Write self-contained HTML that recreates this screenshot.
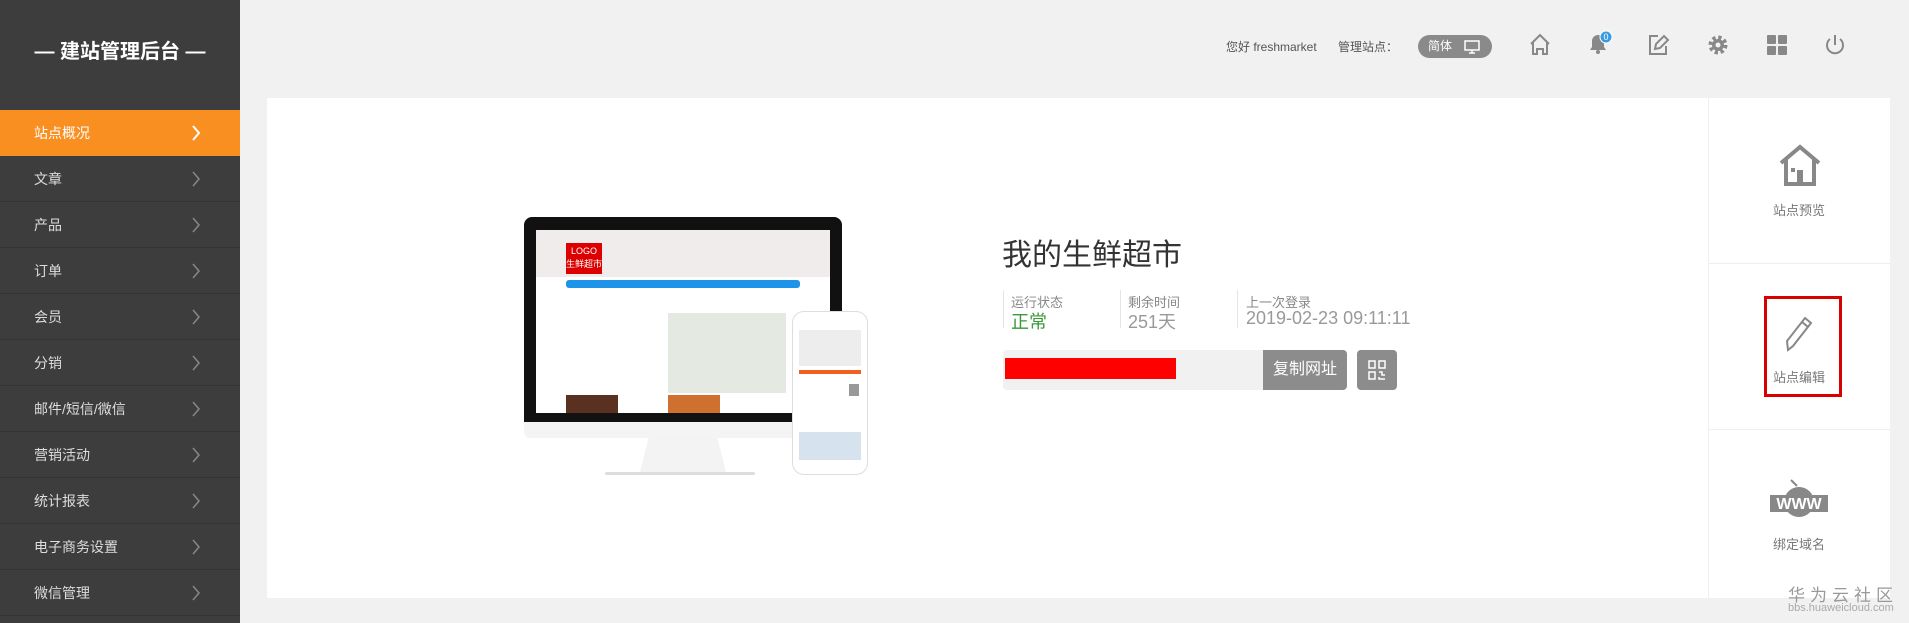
<!DOCTYPE html>
<html><head><meta charset="utf-8"><style>
*{margin:0;padding:0;box-sizing:border-box}
body{width:1909px;height:623px;background:#f1f1f1;font-family:"Liberation Sans","Noto Sans CJK SC",sans-serif;position:relative;overflow:hidden;color:#333}
.a{position:absolute}
#side{left:0;top:0;width:240px;height:623px;background:#3d3d3d}
#side .t{left:0;top:36px;width:240px;text-align:center;color:#fff;font-size:20px;line-height:32px;font-weight:bold}
.mi{left:0;width:240px;height:46px;border-bottom:1px solid #333;color:#ddd;font-size:14px;line-height:46px;padding-left:34px}
.mi svg{position:absolute;left:191px;top:15px}
.on{background:#fa8f21;color:#fff;border:none}
.ic{top:32px}
#panel{left:267px;top:98px;width:1623px;height:500px;background:#fff}
.rs{left:1708px;width:182px;border-left:1px solid #eee;border-bottom:1px solid #eee;text-align:center;color:#777;font-size:13px}
.lbl{font-size:13px;color:#888}
.val{font-size:18px;color:#999}
</style></head><body>
<div id="side" class="a">
 <div class="a t">— 建站管理后台 —</div>
 <div class="a mi on" style="top:110px">站点概况<svg width="10" height="16"><path d="M2 1l6 7-6 7" stroke="#fff" stroke-width="2" fill="none"/></svg></div>
 <div class="a mi" style="top:156px">文章<svg width="10" height="16"><path d="M2 1l6 7-6 7" stroke="#888" stroke-width="1.5" fill="none"/></svg></div>
 <div class="a mi" style="top:202px">产品<svg width="10" height="16"><path d="M2 1l6 7-6 7" stroke="#888" stroke-width="1.5" fill="none"/></svg></div>
 <div class="a mi" style="top:248px">订单<svg width="10" height="16"><path d="M2 1l6 7-6 7" stroke="#888" stroke-width="1.5" fill="none"/></svg></div>
 <div class="a mi" style="top:294px">会员<svg width="10" height="16"><path d="M2 1l6 7-6 7" stroke="#888" stroke-width="1.5" fill="none"/></svg></div>
 <div class="a mi" style="top:340px">分销<svg width="10" height="16"><path d="M2 1l6 7-6 7" stroke="#888" stroke-width="1.5" fill="none"/></svg></div>
 <div class="a mi" style="top:386px">邮件/短信/微信<svg width="10" height="16"><path d="M2 1l6 7-6 7" stroke="#888" stroke-width="1.5" fill="none"/></svg></div>
 <div class="a mi" style="top:432px">营销活动<svg width="10" height="16"><path d="M2 1l6 7-6 7" stroke="#888" stroke-width="1.5" fill="none"/></svg></div>
 <div class="a mi" style="top:478px">统计报表<svg width="10" height="16"><path d="M2 1l6 7-6 7" stroke="#888" stroke-width="1.5" fill="none"/></svg></div>
 <div class="a mi" style="top:524px">电子商务设置<svg width="10" height="16"><path d="M2 1l6 7-6 7" stroke="#888" stroke-width="1.5" fill="none"/></svg></div>
 <div class="a mi" style="top:570px">微信管理<svg width="10" height="16"><path d="M2 1l6 7-6 7" stroke="#888" stroke-width="1.5" fill="none"/></svg></div>
</div>

<div class="a" style="left:1226px;top:38px;font-size:12px;color:#555">您好 freshmarket</div>
<div class="a" style="left:1338px;top:38px;font-size:12px;color:#555">管理站点：</div>
<div class="a" style="left:1418px;top:35px;width:74px;height:23px;border-radius:12px;background:#8a8a8a;color:#fff;font-size:12px;line-height:23px;padding-left:10px">简体
 <svg class="a" style="left:46px;top:5px" width="16" height="14"><rect x="1" y="1" width="14" height="9" fill="none" stroke="#fff" stroke-width="1.5"/><path d="M8 10v3M5 13h6" stroke="#fff" stroke-width="1.5"/></svg></div>
<svg class="a ic" style="left:1528px" width="24" height="26" viewBox="0 0 24 26"><path d="M3 12L12 3l9 9M5 10v12h4v-5h6v5h4V10" fill="none" stroke="#888" stroke-width="2"/></svg>
<svg class="a ic" style="left:1586px;top:28px" width="28" height="28" viewBox="0 0 28 28"><path d="M4 22h16l-2-3v-6a6 6 0 0 0-12 0v6z" fill="#888"/><circle cx="12" cy="24" r="2" fill="#888"/><circle cx="20" cy="9" r="6" fill="#3a9be0" stroke="#fff" stroke-width="1"/><text x="20" y="12" font-size="9" fill="#fff" text-anchor="middle" font-family="Liberation Sans">0</text></svg>
<svg class="a ic" style="left:1646px" width="24" height="26" viewBox="0 0 24 26"><path d="M12 4H4v18h16v-8" fill="none" stroke="#888" stroke-width="2"/><path d="M9 17l1-5 8-8 4 4-8 8z" fill="none" stroke="#888" stroke-width="2"/></svg>
<svg class="a ic" style="left:1706px" width="24" height="26" viewBox="0 0 24 24"><circle cx="12" cy="12" r="7" fill="none" stroke="#888" stroke-width="5" stroke-dasharray="3 2.5"/><circle cx="12" cy="12" r="6" fill="#888"/><circle cx="12" cy="12" r="2.5" fill="#f1f1f1"/></svg>
<svg class="a ic" style="left:1765px" width="24" height="26" viewBox="0 0 24 24"><rect x="2" y="2" width="9" height="9" rx="1" fill="#888"/><rect x="13" y="2" width="9" height="9" rx="1" fill="#888"/><rect x="2" y="13" width="9" height="9" rx="1" fill="#888"/><rect x="13" y="13" width="9" height="9" rx="1" fill="#888"/></svg>
<svg class="a ic" style="left:1823px" width="24" height="26" viewBox="0 0 24 24"><path d="M7 6a8 8 0 1 0 10 0" fill="none" stroke="#888" stroke-width="2"/><path d="M12 2v10" stroke="#888" stroke-width="2"/></svg>

<div id="panel" class="a"></div>
<!-- monitor -->
<div class="a" style="left:524px;top:217px;width:318px;height:205px;background:#111;border-radius:8px 8px 0 0"></div>
<div class="a" style="left:536px;top:230px;width:294px;height:183px;background:#fff"></div>
<div class="a" style="left:536px;top:230px;width:294px;height:47px;background:#efeceb"></div>
<div class="a" style="left:566px;top:243px;width:36px;height:31px;background:#d00;color:#fff;font-size:9px;text-align:center;line-height:13px;padding-top:2px">LOGO<br>生鲜超市</div>
<div class="a" style="left:566px;top:280px;width:234px;height:8px;background:#1d94e8;border-radius:3px"></div>
<div class="a" style="left:668px;top:313px;width:118px;height:80px;background:#e4e9e2"></div>
<div class="a" style="left:566px;top:395px;width:52px;height:18px;background:#5a3020"></div>
<div class="a" style="left:668px;top:395px;width:52px;height:18px;background:#d07030"></div>
<div class="a" style="left:524px;top:422px;width:318px;height:16px;background:#f4f4f4;border-radius:0 0 6px 6px"></div>
<div class="a" style="left:640px;top:438px;width:86px;height:34px;background:#f3f3f3;clip-path:polygon(10% 0,90% 0,100% 100%,0 100%)"></div>
<div class="a" style="left:605px;top:472px;width:150px;height:3px;background:#ddd;border-radius:2px"></div>
<!-- phone -->
<div class="a" style="left:792px;top:311px;width:76px;height:164px;background:#fff;border:1px solid #ddd;border-radius:12px"></div>
<div class="a" style="left:799px;top:330px;width:62px;height:36px;background:#eeeded"></div>
<div class="a" style="left:799px;top:370px;width:62px;height:4px;background:#f06020"></div>
<div class="a" style="left:849px;top:384px;width:10px;height:12px;background:#999"></div>
<div class="a" style="left:799px;top:432px;width:62px;height:28px;background:#d6e2ee"></div>

<div class="a" style="left:1002px;top:238px;font-size:30px;color:#333;line-height:36px">我的生鲜超市</div>
<div class="a" style="left:1003px;top:290px;width:1px;height:38px;background:#e5e5e5"></div>
<div class="a" style="left:1120px;top:290px;width:1px;height:38px;background:#e5e5e5"></div>
<div class="a" style="left:1237px;top:290px;width:1px;height:38px;background:#e5e5e5"></div>
<div class="a lbl" style="left:1011px;top:292px">运行状态</div>
<div class="a val" style="left:1011px;top:308px;color:#3a9a3a">正常</div>
<div class="a lbl" style="left:1128px;top:292px">剩余时间</div>
<div class="a val" style="left:1128px;top:308px">251天</div>
<div class="a lbl" style="left:1246px;top:292px">上一次登录</div>
<div class="a val" style="left:1246px;top:308px">2019-02-23 09:11:11</div>
<div class="a" style="left:1003px;top:350px;width:262px;height:40px;background:#f1f1f1;border-radius:4px 0 0 4px"></div>
<div class="a" style="left:1005px;top:358px;width:171px;height:21px;background:#f00"></div>
<div class="a" style="left:1263px;top:350px;width:84px;height:40px;background:#8c8c8c;color:#fff;font-size:16px;line-height:40px;text-align:center;border-radius:0 4px 4px 0">复制网址</div>
<div class="a" style="left:1357px;top:350px;width:40px;height:40px;background:#8c8c8c;border-radius:4px"><svg class="a" style="left:11px;top:10px" width="18" height="20"><g fill="none" stroke="#fff" stroke-width="1.5"><rect x="1" y="1" width="6" height="7"/><rect x="11" y="1" width="6" height="7"/><rect x="1" y="12" width="6" height="7"/><path d="M11 12h3v3h3M11 17v2h6"/></g></svg></div>

<div class="a rs" style="top:98px;height:166px"></div>
<div class="a rs" style="top:264px;height:166px"></div>
<div class="a rs" style="top:430px;height:168px;border-bottom:none"></div>
<svg class="a" style="left:1778px;top:144px" width="44" height="42" viewBox="0 0 44 42"><path d="M3 19L22 3l19 16M8 15v25h28V15" fill="none" stroke="#888" stroke-width="4"/><rect x="19" y="26" width="6" height="14" fill="#888"/><rect x="13" y="24" width="4" height="4" fill="#888"/></svg>
<div class="a" style="left:1708px;top:200px;width:182px;text-align:center;font-size:13px;color:#777">站点预览</div>
<div class="a" style="left:1764px;top:296px;width:78px;height:101px;border:3px solid #d90000"></div>
<svg class="a" style="left:1781px;top:314px" width="36" height="38" viewBox="0 0 36 38"><path d="M7 36l-1-9L24 4l6 5-18 23z" fill="none" stroke="#888" stroke-width="2"/><path d="M21 8l6 5" stroke="#888" stroke-width="2"/></svg>
<div class="a" style="left:1708px;top:367px;width:182px;text-align:center;font-size:13px;color:#777">站点编辑</div>
<svg class="a" style="left:1769px;top:476px" width="60" height="46" viewBox="0 0 60 46"><circle cx="30" cy="26" r="15" fill="#888"/><path d="M22 4l6 6" stroke="#888" stroke-width="2"/><rect x="1" y="19" width="58" height="17" fill="#888"/><text x="30" y="33" font-size="16" font-weight="bold" fill="#fff" text-anchor="middle" font-family="Liberation Sans">WWW</text></svg>
<div class="a" style="left:1708px;top:534px;width:182px;text-align:center;font-size:13px;color:#777">绑定域名</div>
<div class="a" style="left:1788px;top:581px;font-size:17px;color:#999;letter-spacing:5px">华为云社区</div>
<div class="a" style="left:1788px;top:602px;font-size:11px;color:#aaa">bbs.huaweicloud.com</div>
</body></html>
